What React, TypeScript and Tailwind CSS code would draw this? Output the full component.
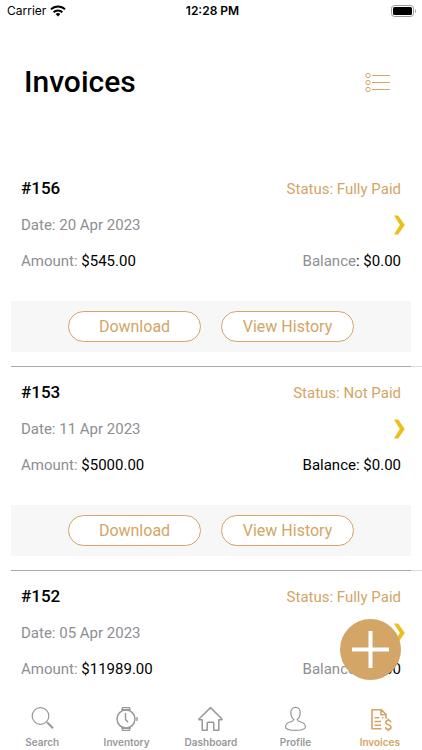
import type { ReactNode } from "react";

type Invoice = {
  id: string;
  date: string;
  amount: string;
  balance: string;
  status: string;
  balanceLabel: ReactNode;
  actions: string[];
};

const mutedLabel = (
  <>
    <span className="text-[#8e8e93]">Balance</span>:
  </>
);

const invoices: Invoice[] = [
  { id: "156", date: "20 Apr 2023", amount: "$545.00", balance: "$0.00", status: "Fully Paid", balanceLabel: mutedLabel, actions: ["Download", "View History"] },
  { id: "153", date: "11 Apr 2023", amount: "$5000.00", balance: "$0.00", status: "Not Paid", balanceLabel: "Balance:", actions: ["Download", "View History"] },
  { id: "152", date: "05 Apr 2023", amount: "$11989.00", balance: "$0.00", status: "Fully Paid", balanceLabel: mutedLabel, actions: [] },
];

function StatusBar() {
  return (
    <div className="grid h-[22px] shrink-0 grid-cols-3 items-center pr-1 pl-[7px] font-['Inter','Liberation_Sans',sans-serif] text-xs text-black">
      <div className="flex items-center gap-1">
        <span>Carrier</span>
        <svg width="16" height="12" viewBox="0 0 16 12" aria-hidden="true">
          <g fill="none" stroke="#000" strokeWidth="2">
            <path d="M1 4.400a10 10 0 0 1 14 0" />
            <path d="M3.600 7.200a6.300 6.300 0 0 1 8.800 0" />
          </g>
          <path d="M5.600 9.100a3.500 3.500 0 0 1 4.800 0L8 11.600z" />
        </svg>
      </div>
      <span className="text-center font-semibold">12:28 PM</span>
      <svg className="justify-self-end" width="27" height="12" viewBox="0 0 27 12" aria-hidden="true">
        <rect x="0.5" y="0.5" width="22" height="11" rx="3" fill="#fff" stroke="#999" />
        <rect x="2" y="2" width="19" height="8" rx="1.5" />
        <path d="M24 4v4c1.300-.5 1.300-3.500 0-4z" fill="#999" />
      </svg>
    </div>
  );
}

function InvoiceItem({ invoice }: { invoice: Invoice }) {
  return (
    <li>
      <div className="flex h-[203px] flex-col justify-between px-[11px] pt-2 pb-[14px]">
        <div className="flex flex-col px-[10px] text-[15px]">
          <div className="flex h-9 items-center justify-between">
            <h2 className="text-[17px] font-medium text-black">#{invoice.id}</h2>
            <span className="text-[#d3a566]">Status: {invoice.status}</span>
          </div>
          <div className="flex h-9 items-center justify-between text-[#8e8e93]">
            <span>Date: {invoice.date}</span>
            <button type="button" aria-label={`Open invoice ${invoice.id}`} className="-mr-1">
              <svg width="11" height="20" viewBox="0 0 11 20" fill="#ecc01c" aria-hidden="true">
                <path d="M0 0.500h4.200L10.800 10 4.200 19.500H0L5.800 10z" />
              </svg>
            </button>
          </div>
          <div className="flex h-9 items-center justify-between text-black">
            <span>
              <span className="text-[#8e8e93]">Amount:</span> {invoice.amount}
            </span>
            <span>
              {invoice.balanceLabel} {invoice.balance}
            </span>
          </div>
        </div>
        {invoice.actions.length > 0 && (
          <div className="flex h-[51px] items-center justify-center gap-5 bg-[#f7f7f7] text-base text-[#d3a566]">
            {invoice.actions.map((action) => (
              <button
                key={action}
                type="button"
                className="h-[31px] w-[133px] rounded-full border border-[#d3a566] bg-white"
              >
                {action}
              </button>
            ))}
          </div>
        )}
      </div>
      <div className="ml-[11px] flex h-px bg-[#dcdcdc]">
        <div className="mr-[11px] flex-1 bg-[#aaaaaa]" />
      </div>
    </li>
  );
}

const tabs: { label: string; active?: boolean; icon: ReactNode }[] = [
  {
    label: "Search",
    icon: (
      <>
        <circle cx="10.500" cy="10" r="8.300" />
        <path d="M16.500 16l1 1" />
        <path d="M17.500 16.700l5.500 5.600" strokeWidth="2" />
      </>
    ),
  },
  {
    label: "Inventory",
    icon: (
      <>
        <circle cx="12" cy="13" r="9" strokeWidth="1.500" />
        <path d="M7.500 5.200L8.500 1.500h7l1 3.700M8.200 3.300h7.600M7.500 20.800l1 3.700h7l1-3.700M8.200 22.700h7.600M22 11.800h1.200v2.400H22" strokeWidth="1.200" />
        <path d="M11.500 7v6.500l2.500 2.800" strokeWidth="1.500" />
      </>
    ),
  },
  {
    label: "Dashboard",
    icon: (
      <path
        d="M12.500 1.600L24 13v.7h-3.200v10.600h-5v-7.200q0-.8-.8-.8h-5q-.8 0-.8.8v7.200h-5V13.700H1V13z"
        strokeWidth="1.500"
        strokeLinejoin="round"
      />
    ),
  },
  {
    label: "Profile",
    icon: (
      <path
        d="M12.500 1.300c-3.200 0-4.900 2.500-4.700 6 .2 3 1.400 5.200 3 6.300-.2 1.200-1.400 1.700-3.200 2.200C4.500 16.800 2.500 18 2.500 21c0 2 4.500 3.400 10 3.400s10-1.400 10-3.400c0-3-2-4.200-5.100-5.200-1.800-.5-3-1-3.200-2.200 1.600-1.100 2.800-3.300 3-6.300.2-3.500-1.500-6-4.700-6z"
        strokeWidth="1.200"
      />
    ),
  },
  {
    label: "Invoices",
    active: true,
    icon: (
      <g strokeWidth="1.600">
        <path d="M14.500 22.700H5V3.700h9.300l4.700 4.700v4.300M14 4v4.700h4.700M7.500 11.700h5M7.500 15.500h6.500M7.500 19.300h6.500M15 11.700h1.500" />
        <path d="M23.800 16.300c-.3-1.500-1.300-2-2.500-2-1.500 0-2.500.8-2.500 2.200 0 3 5.200 1.700 5.200 4.700 0 1.500-1.200 2.200-2.700 2.200s-2.600-.8-2.800-2.300M21.300 12.500v1.800M21.300 23.400v1.800" />
      </g>
    ),
  },
];

function TabBar() {
  return (
    <nav className="grid h-[52px] shrink-0 grid-cols-5 bg-white">
      {tabs.map((tab) => (
        <a
          key={tab.label}
          href={`#${tab.label.toLowerCase()}`}
          aria-current={tab.active ? "page" : undefined}
          className={`flex flex-col items-center gap-[2px] pt-2 font-['Inter','Liberation_Sans',sans-serif] text-[10px] leading-4 font-semibold ${
            tab.active ? "text-[#d3a566]" : "text-[#999999]"
          }`}
        >
          <svg width="25" height="26" viewBox="0 0 25 26" fill="none" stroke="currentColor" strokeWidth="1.200" aria-hidden="true">
            {tab.icon}
          </svg>
          {tab.label}
        </a>
      ))}
    </nav>
  );
}

export default function App() {
  return (
    <div className="flex h-screen flex-col bg-white font-['Roboto','Liberation_Sans',sans-serif]">
      <StatusBar />
      <header className="flex h-[141px] shrink-0 items-start justify-between pt-10 pr-[31px] pl-6">
        <h1 className="text-[30px] leading-10 font-medium text-black">Invoices</h1>
        <button type="button" aria-label="Filter invoices" className="flex h-10 items-center">
          <svg width="26" height="20" viewBox="0 0 26 20" fill="none" stroke="#d3a566" strokeWidth="1" aria-hidden="true">
            <circle cx="3" cy="3.500" r="2.200" />
            <circle cx="3" cy="10.500" r="2.200" />
            <circle cx="3" cy="17.500" r="2.200" />
            <path d="M7 3.500h18M7 10.500h18M7 17.500h18" />
          </svg>
        </button>
      </header>
      <main className="relative min-h-0 flex-1">
        <ul className="h-full overflow-hidden">
          {invoices.map((invoice) => (
            <InvoiceItem key={invoice.id} invoice={invoice} />
          ))}
        </ul>
        <button
          type="button"
          aria-label="New invoice"
          className="absolute right-[21px] bottom-[18px] flex size-[61px] items-center justify-center rounded-full bg-[#d3a566]"
        >
          <svg width="37" height="37" viewBox="0 0 37 37" stroke="#fff" strokeWidth="4" aria-hidden="true">
            <path d="M18.500 0v37M0 18.500h37" />
          </svg>
        </button>
      </main>
      <TabBar />
    </div>
  );
}
